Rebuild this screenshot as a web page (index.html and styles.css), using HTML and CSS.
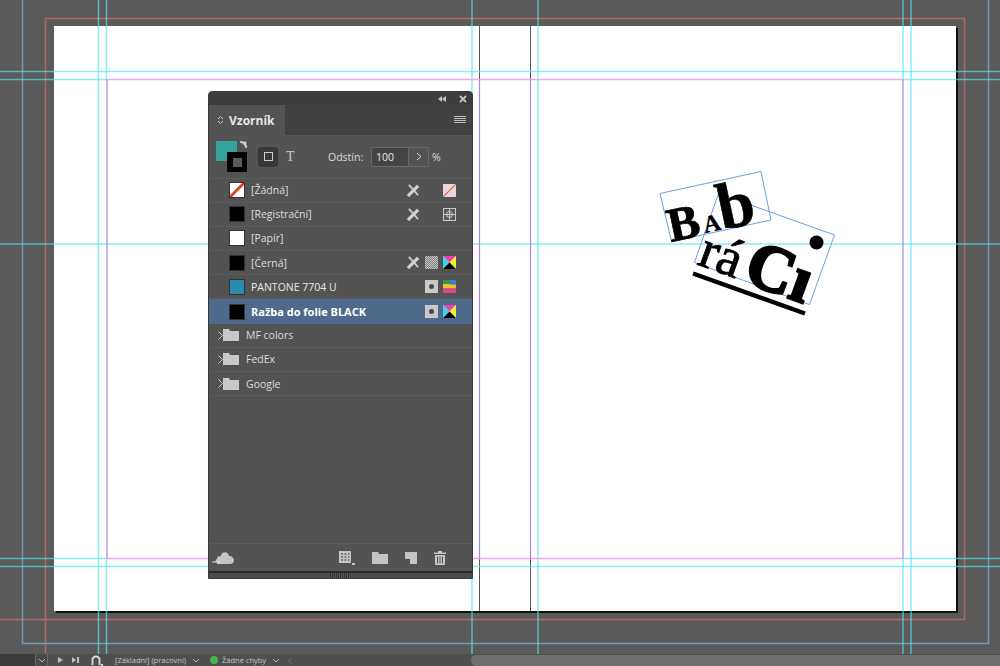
FILE: index.html
```html
<!DOCTYPE html>
<html lang="cs">
<head>
  <meta charset="UTF-8" />
  <title>Vzorník</title>
  <link rel="stylesheet" href="styles.css">
</head>
<body>
  <div class="desk">
    <svg class="spread" width="1000" height="654" viewBox="0 0 1000 654">
      <rect class="shadow" x="56" y="28" width="902" height="585" />
      <rect class="paper" x="54" y="26" width="902" height="585" />
      <path class="bleed" d="M45.500 654V18.500H964.500V619.500H0" />
      <path class="slug" d="M22.500 0V643.500H988.500V0" />
      <path class="fold" d="M479.500 26V611M530.500 26V611" />
      <path class="guide" d="M0 71.500H1000M0 79.500H107M903 79.500H1000M0 244H1000M0 558.500H107M903 558.500H1000M0 566.500H1000" />
      <path class="guide" d="M98.500 0V654M106.500 0V79M106.500 559V654M472 0V654M538 0V654M903 0V79M903 559V654M911 0V654" />
      <path class="margin-h" d="M107 79.500H903M107 558.500H903" />
      <path class="margin-v" d="M107 79.500V558.500M903 79.500V558.500M479.500 79.500V558.500M530.500 79.500V558.500" />

      <g class="logo">
        <polygon class="frame" points="660,193.500 761,171.500 771,220 671.500,241.500" />
        <polygon class="frame" points="718.500,193.500 834.500,235 809.500,304.500 694.500,262.500" />
        <text class="big" transform="translate(671 242) rotate(-12)" font-size="48">B</text>
        <text class="small" transform="translate(705 233) rotate(-12)" font-size="24">A</text>
        <text class="tall" transform="translate(722 230) rotate(-12)" font-size="66">b</text>
        <text class="thin" transform="translate(696 264) rotate(20)" font-size="54">rá</text>
        <text class="heavy" transform="translate(741.500 281) rotate(20)" font-size="66">Cı</text>
        <circle cx="816.500" cy="242.500" r="7" />
        <path class="rule" d="M693 273.500L805 313.500" />
      </g>
    </svg>

    <section class="panel">
      <div class="panel-top">
        <svg width="8" height="6" viewBox="0 0 8 6"><path d="M4 0V6L0 3ZM8 0V6L4 3Z" /></svg>
        <svg class="close" width="8" height="8" viewBox="0 0 8 8"><path d="M1 1L7 7M7 1L1 7" /></svg>
      </div>
      <div class="tabs">
        <div class="tab">
          <svg width="7" height="10" viewBox="0 0 7 10"><path d="M1 4L3.500 1.500L6 4M1 6L3.500 8.500L6 6" /></svg>
          Vzorník
        </div>
        <svg class="menu" width="12" height="8" viewBox="0 0 12 8"><path d="M0 .5H12M0 2.500H12M0 4.500H12M0 6.500H12" /></svg>
      </div>

      <div class="controls">
        <div class="fill-stroke">
          <span class="fill"></span>
          <span class="stroke"><i></i></span>
          <svg class="swap" width="8" height="7" viewBox="0 0 8 7"><path d="M1 1H6V6M0 1L2 0V2ZM6 7L5 5H7Z" /></svg>
        </div>
        <button class="format"><i></i></button>
        <span class="type-t">T</span>
        <label class="tint">Odstín:</label>
        <div class="tint-input">100</div>
        <div class="tint-step">
          <svg width="6" height="9" viewBox="0 0 6 9"><path d="M1 1L5 4.500L1 8" /></svg>
        </div>
        <span class="percent">%</span>
      </div>

      <ul class="swatches">
        <li>
          <svg class="chip" width="14" height="14" viewBox="0 0 14 14"><rect width="14" height="14" fill="#fff" /><path d="M0 14L14 0" stroke="#e0401f" stroke-width="3" /></svg>
          <span class="name">[Žádná]</span>
          <svg class="cell" width="14" height="14" viewBox="0 0 14 14"><path class="no-edit" d="M2 1L12 12" /><path class="no-edit-pen" d="M12 2L3 11L1 13" /></svg>
          <span class="cell"></span>
          <svg class="cell" width="13" height="13" viewBox="0 0 13 13"><rect width="13" height="13" fill="#ead6d6" /><path d="M0 13L13 0" stroke="#e0605a" stroke-width="1.200" /></svg>
        </li>
        <li>
          <span class="chip black"></span>
          <span class="name">[Registrační]</span>
          <svg class="cell" width="14" height="14" viewBox="0 0 14 14"><path class="no-edit" d="M2 1L12 12" /><path class="no-edit-pen" d="M12 2L3 11L1 13" /></svg>
          <span class="cell"></span>
          <svg class="cell" width="13" height="13" viewBox="0 0 13 13"><rect x=".5" y=".5" width="12" height="12" fill="#5a5a5a" stroke="#c8c8c8" /><circle cx="6.500" cy="6.500" r="3" fill="none" stroke="#c8c8c8" /><path d="M6.500 0V13M0 6.500H13" stroke="#c8c8c8" /></svg>
        </li>
        <li>
          <span class="chip white"></span>
          <span class="name">[Papír]</span>
        </li>
        <li>
          <span class="chip black"></span>
          <span class="name">[Černá]</span>
          <svg class="cell" width="14" height="14" viewBox="0 0 14 14"><path class="no-edit" d="M2 1L12 12" /><path class="no-edit-pen" d="M12 2L3 11L1 13" /></svg>
          <span class="cell screen"></span>
          <svg class="cell" width="13" height="13" viewBox="0 0 13 13"><use href="#cmyk" /></svg>
        </li>
        <li class="pantone-row">
          <span class="chip pantone"></span>
          <span class="name">PANTONE 7704 U</span>
          <span class="cell spot"><i></i></span>
          <svg class="cell" width="13" height="13" viewBox="0 0 13 13">
            <rect width="13" height="4.500" fill="#3f8f4a" />
            <rect y="4" width="13" height="4.500" fill="#e8c52a" />
            <rect y="8.500" width="13" height="4.500" fill="#d8488a" />
            <rect x="7" width="6" height="4.500" fill="#3a7fd0" />
          </svg>
        </li>
        <li class="selected">
          <span class="chip black"></span>
          <span class="name">Ražba do folie BLACK</span>
          <span class="cell spot"><i></i></span>
          <svg class="cell" width="13" height="13" viewBox="0 0 13 13">
            <g id="cmyk">
              <rect width="13" height="13" fill="#f2ef3a" />
              <path d="M0 0H13L6.500 6.500Z" fill="#ee3fae" />
              <path d="M0 0L6.500 6.500L0 13Z" fill="#3fd0ee" />
              <path d="M13 0L6.500 6.500L13 13Z" fill="#f2ef3a" />
              <path d="M0 13L6.500 6.500L13 13Z" fill="#000" />
            </g>
          </svg>
        </li>
        <li class="group">
          <svg class="caret" width="5" height="9" viewBox="0 0 5 9"><path d="M.5 .5L4.500 4.500L.5 8.500" /></svg>
          <svg class="folder" width="16" height="12" viewBox="0 0 16 12"><path d="M0 0H6L7 2H16V12H0Z" /></svg>
          <span class="name">MF colors</span>
        </li>
        <li class="group">
          <svg class="caret" width="5" height="9" viewBox="0 0 5 9"><path d="M.5 .5L4.500 4.500L.5 8.500" /></svg>
          <svg class="folder" width="16" height="12" viewBox="0 0 16 12"><path d="M0 0H6L7 2H16V12H0Z" /></svg>
          <span class="name">FedEx</span>
        </li>
        <li class="group">
          <svg class="caret" width="5" height="9" viewBox="0 0 5 9"><path d="M.5 .5L4.500 4.500L.5 8.500" /></svg>
          <svg class="folder" width="16" height="12" viewBox="0 0 16 12"><path d="M0 0H6L7 2H16V12H0Z" /></svg>
          <span class="name">Google</span>
        </li>
      </ul>

      <div class="panel-foot">
        <svg class="cloud" width="22" height="14" viewBox="0 0 22 14"><path d="M5 12C3 12 3 8.500 5 8C5 5.500 7.500 5 8.500 5.500C10 0 16 0 17 5C20 5 22 7 22 9.500C22 12 20 13 18 13H5Z" /><path class="cloud-arrow" d="M0 11H8M6 9L8.500 11L6 13" /></svg>
        <div class="foot-tools">
          <svg width="16" height="14" viewBox="0 0 16 14">
            <rect width="12" height="12" fill="#c4c4c4" />
            <path d="M2 3H4M5.500 3H7.500M9 3H10.500M2 6H4M5.500 6H7.500M9 6H10.500M2 9H4M5.500 9H7.500M9 9H10.500" stroke="#333" />
            <rect x="13" y="12" width="3" height="2" fill="#c4c4c4" />
          </svg>
          <svg width="16" height="12" viewBox="0 0 16 12"><path d="M0 0H6L7 2H16V12H0Z" /></svg>
          <svg width="12" height="12" viewBox="0 0 12 12"><path d="M0 0H12V12H5V7H0Z" /></svg>
          <svg width="12" height="14" viewBox="0 0 12 14"><path d="M4 0H8V1.500H12V3H0V1.500H4ZM1 4H11V14H1ZM3 5.500V12.500H4V5.500ZM5.500 5.500V12.500H6.500V5.500ZM8 5.500V12.500H9V5.500Z" fill-rule="evenodd" /></svg>
        </div>
      </div>
      <div class="panel-grip"><i></i></div>
    </section>

    <footer class="statusbar">
      <div class="page-field"><span class="field-arrow">
        <svg width="8" height="5" viewBox="0 0 8 5"><path d="M1 1L4 4L7 1" /></svg>
      </span></div>
      <svg class="nav" width="5" height="6" viewBox="0 0 5 6"><path d="M0 0L5 3L0 6Z" /></svg>
      <svg class="nav" width="7" height="6" viewBox="0 0 7 6"><path d="M0 0L4 3L0 6ZM5 0H7V6H5Z" /></svg>
      <svg class="preflight-icon" width="12" height="11" viewBox="0 0 12 11"><path d="M1.500 10V5A3.500 3.500 0 0 1 8.500 5V10" /><path class="dot" d="M10 10H12" /></svg>
      <span class="status-text workspace">[Základní] (pracovní)</span>
      <svg class="chev" width="8" height="5" viewBox="0 0 8 5"><path d="M1 1L4 4L7 1" /></svg>
      <i class="ok-dot"></i>
      <span class="status-text">Žádné chyby</span>
      <svg class="chev" width="8" height="5" viewBox="0 0 8 5"><path d="M1 1L4 4L7 1" /></svg>
      <svg class="chev left" width="4" height="7" viewBox="0 0 4 7"><path d="M3.500 .5L.5 3.500L3.500 6.500" /></svg>
      <div class="scroll-thumb"></div>
    </footer>
  </div>
</body>
</html>
```

FILE: styles.css
```css
* {
  box-sizing: border-box;
}
body {
  margin: 0;
  background: #5a5a5a;
  font-family: "Open Sans", sans-serif;
}
.desk {
  position: relative;
  width: 1000px;
  height: 666px;
  overflow: hidden;
  background: #5a5a5a;
  display: flex;
  flex-direction: column;
  justify-content: flex-end;
}

/* the spread */
.spread {
  position: absolute;
  left: 0;
  top: 0;
}
.shadow {
  fill: #111;
}
.paper {
  fill: #fff;
}
.bleed {
  fill: none;
  stroke: #c46a6c;
  stroke-opacity: .8;
  stroke-width: 1.500;
}
.slug {
  fill: none;
  stroke: #6f9db0;
  stroke-width: 1.500;
}
.fold {
  stroke: #555;
  fill: none;
}
.margin-h {
  fill: none;
  stroke: #f0a4f4;
  stroke-width: 1.500;
}
.margin-v {
  fill: none;
  stroke: #a985e2;
  stroke-width: 1.200;
}
.guide {
  fill: none;
  stroke: #55e5ee;
  stroke-opacity: .68;
  stroke-width: 1.500;
}

/* logo */
.logo text {
  font-family: "Liberation Serif", serif;
  fill: #000;
  stroke: #000;
}
.logo .big, .logo .small, .logo .tall, .logo .heavy {
  font-weight: bold;
}
.logo .big {
  stroke-width: .8;
}
.logo .small {
  stroke-width: .3;
}
.logo .tall {
  stroke-width: .6;
}
.logo .thin {
  stroke-width: .9;
}
.logo .heavy {
  stroke-width: 2.500;
}
.logo .frame {
  fill: none;
  stroke: #6c9ee0;
  stroke-width: 1;
}
.logo .rule {
  stroke: #000;
  stroke-width: 4.500;
}

/* panel */
.panel {
  position: absolute;
  left: 208px;
  top: 91px;
  width: 265px;
  height: 488px;
  background: #535353;
  border: 1px solid #3a3a3a;
  border-radius: 4px 4px 0 0;
  display: flex;
  flex-direction: column;
  color: #dcdcdc;
  font-size: 10.500px;
}
.panel-top {
  height: 13px;
  background: #3d3d3d;
  border-radius: 3px 3px 0 0;
  display: flex;
  align-items: center;
  justify-content: flex-end;
  gap: 13px;
  padding-right: 5px;
}
.panel-top svg {
  fill: #c4c4c4;
}
.panel-top .close {
  stroke: #c4c4c4;
  stroke-width: 1.800;
}
.tabs {
  height: 30px;
  background: #414141;
  display: flex;
  align-items: stretch;
  justify-content: space-between;
}
.tab {
  width: 76px;
  background: #535353;
  display: flex;
  align-items: center;
  gap: 5px;
  padding-left: 8px;
  font-size: 12px;
  font-weight: bold;
  color: #e6e6e6;
}
.tab svg {
  fill: none;
  stroke: #c8c8c8;
}
.menu {
  align-self: center;
  margin-right: 6px;
  stroke: #bdbdbd;
}
.controls {
  height: 43.500px;
  display: flex;
  align-items: center;
  padding-top: 1px;
  border-bottom: 1px solid #5c5c5c;
}
.fill-stroke {
  position: relative;
  width: 32px;
  height: 31px;
  margin-left: 7px;
}
.fill {
  position: absolute;
  left: 0;
  top: 0;
  width: 21px;
  height: 20px;
  background: #34a39c;
}
.stroke {
  position: absolute;
  left: 11px;
  top: 11px;
  width: 20px;
  height: 20px;
  background: #050505;
  display: flex;
  align-items: center;
  justify-content: center;
}
.stroke i {
  width: 9px;
  height: 9px;
  background: #5a5a5a;
}
.swap {
  position: absolute;
  left: 24px;
  top: 0;
  fill: #d0d0d0;
  stroke: #d0d0d0;
  stroke-width: .8;
}
.format {
  width: 20px;
  height: 20px;
  margin-left: 10px;
  padding: 0;
  border: 0;
  border-radius: 3px;
  background: #383838;
  display: flex;
  align-items: center;
  justify-content: center;
}
.format i {
  width: 9px;
  height: 9px;
  border: 1px solid #cfcfcf;
}
.type-t {
  margin-left: 8px;
  width: 42px;
  font-family: "Liberation Serif", serif;
  font-size: 14px;
  color: #c8c8c8;
}
.tint {
  width: 43px;
  font-size: 10.500px;
}
.tint-input {
  width: 38px;
  height: 20px;
  line-height: 19px;
  padding-left: 4px;
  background: #454545;
  border: 1px solid #6a6a6a;
  border-radius: 2px 0 0 2px;
  color: #e8e8e8;
}
.tint-step {
  width: 20px;
  height: 20px;
  border: 1px solid #6a6a6a;
  border-left: 0;
  border-radius: 0 2px 2px 0;
  display: flex;
  align-items: center;
  justify-content: center;
}
.tint-step svg {
  fill: none;
  stroke: #d6d6d6;
}
.percent {
  margin-left: 3px;
}

/* swatch list */
.swatches {
  list-style: none;
  margin: 0;
  padding: 0;
}
.swatches li {
  height: 24.200px;
  display: flex;
  align-items: center;
  padding: 0 2px 0 21px;
  border-bottom: 1px solid #5c5c5c;
}
.swatches .name {
  flex: 1;
  margin-left: 7px;
  white-space: nowrap;
}
.chip {
  width: 14px;
  height: 14px;
  flex: none;
  outline: 1px solid #333;
}
.black {
  background: #000;
}
.white {
  background: #fff;
}
.pantone {
  background: #2b8bb0;
}
.cell {
  width: 13px;
  height: 13px;
  flex: none;
  margin: 0 2.500px;
}
.swatches .cell:last-child {
  margin-right: 14px;
}
.no-edit {
  fill: none;
  stroke: #cfcfcf;
  stroke-width: 1.800;
}
.no-edit-pen {
  fill: none;
  stroke: #cfcfcf;
  stroke-width: 3.500;
}
.screen {
  background: repeating-conic-gradient(#c8c8c8 0 25%, #7a7a7a 0 50%) 0 0 / 2px 2px;
}
.spot {
  background: #c9c9c9;
  display: flex;
  align-items: center;
  justify-content: center;
}
.spot i {
  width: 5px;
  height: 5px;
  border-radius: 50%;
  background: #4a4a4a;
}
.pantone-row .name {
  color: #e8e8e8;
}
.swatches .selected {
  background: #4d6a8c;
  border-bottom: 0;
  color: #fff;
  font-weight: bold;
}
.swatches .selected .name {
  font-size: 11px;
}
.swatches .group {
  padding-left: 9px;
}
.swatches .group .name {
  margin-left: 7px;
}
.caret {
  fill: none;
  stroke: #c8c8c8;
  flex: none;
}
.folder {
  fill: #c8c8c8;
  flex: none;
}

.panel-foot {
  margin-top: auto;
  height: 28px;
  border-top: 1px solid #5c5c5c;
  display: flex;
  align-items: center;
  justify-content: space-between;
  padding: 0 26px 0 3px;
}
.cloud, .foot-tools svg {
  fill: #c4c4c4;
}
.cloud-arrow {
  fill: none;
  stroke: #d8d8d8;
}
.foot-tools {
  display: flex;
  align-items: center;
  gap: 17px;
}
.panel-grip {
  height: 7px;
  background: #4a4a4a;
  border-top: 2px solid #2b2b2b;
  display: flex;
  justify-content: center;
}
.panel-grip i {
  width: 22px;
  height: 5px;
  background: repeating-linear-gradient(90deg, #333 0 1px, #555 1px 2px);
}

/* status bar */
.statusbar {
  position: relative;
  height: 12px;
  display: flex;
  align-items: center;
  background: #4f4f4f;
  color: #c6c6c6;
  font-size: 7.500px;
}
.page-field {
  width: 48px;
  height: 12px;
  display: flex;
  justify-content: flex-end;
  background: #3c3c3c;
}
.field-arrow {
  width: 13px;
  display: flex;
  align-items: center;
  justify-content: center;
  background: #4a4a4a;
  border-left: 1px solid #6a6a6a;
  border-right: 1px solid #6a6a6a;
}
.field-arrow svg, .chev {
  fill: none;
  stroke: #b8b8b8;
  flex: none;
}
.nav {
  fill: #c0c0c0;
  margin-left: 10px;
  flex: none;
}
.nav + .nav {
  margin-left: 9px;
}
.preflight-icon {
  fill: none;
  stroke: #d8d8d8;
  stroke-width: 2;
  margin-left: 12px;
  flex: none;
}
.status-text {
  white-space: nowrap;
}
.workspace {
  margin-left: 12px;
}
.chev {
  margin: 0 8px 0 6px;
}
.ok-dot {
  width: 8px;
  height: 8px;
  margin: 0 4px 0 2px;
  border-radius: 50%;
  background: #4eb04a;
  flex: none;
}
.chev.left {
  margin: 0;
  stroke: #777;
}
.scroll-thumb {
  position: absolute;
  left: 471px;
  right: 0;
  top: 1px;
  height: 11px;
  border-radius: 5px 0 0 5px;
  background: #6e6e6e;
}
```
